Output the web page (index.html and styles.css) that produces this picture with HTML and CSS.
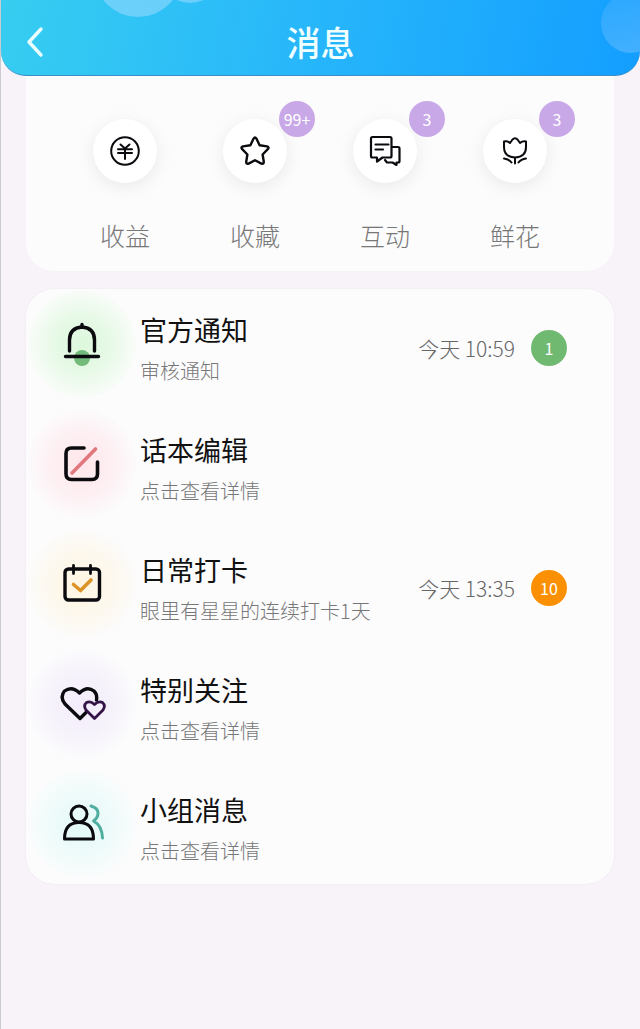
FILE: index.html
```html
<!DOCTYPE html>
<html lang="zh-CN">
<head>
    <meta charset="UTF-8">
    <meta name="viewport" content="width=device-width, initial-scale=1.0">
    <title>消息</title>
    <link rel="stylesheet" href="styles.css">
</head>
<body>
    <header class="header">
        <span class="bubble bubble-big"></span>
        <span class="bubble bubble-small"></span>
        <span class="bubble bubble-right"></span>
        <button class="back" type="button" aria-label="返回">
            <svg width="20" height="32" viewBox="0 0 20 32"><path d="M16 3 4 16l12 13" fill="none" stroke="#e8feff" stroke-width="3.4" stroke-linecap="round" stroke-linejoin="round"/></svg>
        </button>
        <h1>消息</h1>
    </header>

    <main>
        <nav class="card shortcuts">
            <a class="shortcut" href="#">
                <span class="shortcut-icon">
                    <svg class="icon" width="32" height="32" viewBox="0 0 32 32" stroke-width="2">
                        <circle cx="16" cy="16" r="13.8"/>
                        <path d="M11.5 9.5 16 13.5l4.5-4M9 14.2h14M9 18h14M16 13.5V24"/>
                    </svg>
                </span>
                <span class="shortcut-label">收益</span>
            </a>
            <a class="shortcut" href="#">
                <span class="shortcut-icon">
                    <svg class="icon" width="32" height="32" viewBox="0 0 32 32" stroke-width="2.4">
                        <path d="M14.6 3.6q1.4-2.2 2.8 0l3.2 6.6 7.4 1.2q2.6.8.8 2.8l-5.2 5.3 1.2 7.3q0 2.6-2.4 1.8L16 25.2l-6.4 3.4q-2.4.8-2.4-1.8l1.2-7.3-5.2-5.3q-1.8-2 .8-2.8l7.4-1.2z"/>
                    </svg>
                    <span class="badge badge-purple">99+</span>
                </span>
                <span class="shortcut-label">收藏</span>
            </a>
            <a class="shortcut" href="#">
                <span class="shortcut-icon">
                    <svg class="icon" width="32" height="32" viewBox="0 0 32 32" stroke-width="2.2">
                        <path d="M3.500 2H21q1.500 0 1.500 1.500V21q0 1.500-1.500 1.500h-7.500L8 26.500v-4H3.500Q2 22.500 2 21V3.500Q2 2 3.500 2zM6.500 9.500h13M6.500 14.500h7.500M23 12h6q1.500 0 1.500 1.500V26q0 1.500-1.500 1.500h-1.500V30l-4-2.500h-5.500L16 25"/>
                    </svg>
                    <span class="badge badge-purple">3</span>
                </span>
                <span class="shortcut-label">互动</span>
            </a>
            <a class="shortcut" href="#">
                <span class="shortcut-icon">
                    <svg class="icon" width="32" height="32" viewBox="0 0 32 32" stroke-width="2">
                        <path d="M5 6.500q3.200-.8 6 1.500l2.500-3.500Q16 2 18.500 4.500L21 8q2.800-2.300 6-1.500V12q0 10-11 10.500Q5 22 5 12zM16 22.500V28.500M5 23.500q5 .5 7.500 4M27 23.500q-5 .5-7.500 4"/>
                    </svg>
                    <span class="badge badge-purple">3</span>
                </span>
                <span class="shortcut-label">鲜花</span>
            </a>
        </nav>

        <ul class="card messages">
            <li>
                <a class="message" href="#">
                    <span class="message-icon green">
                        <svg class="icon" width="48" height="48" viewBox="0 0 48 48" stroke-width="3.400">
                            <circle cx="24" cy="38" r="8" fill="#72bb7a" stroke="none"/>
                            <path d="M11.500 31V20q0-12 12.500-13 12.500 1 12.500 13v11M24 6V4.500M7.500 36.500h33"/>
                        </svg>
                    </span>
                    <span class="message-text">
                        <span class="message-title">官方通知</span>
                        <span class="message-sub">审核通知</span>
                    </span>
                    <time class="message-time">今天 10:59</time>
                    <span class="badge badge-green">1</span>
                </a>
            </li>
            <li>
                <a class="message" href="#">
                    <span class="message-icon red">
                        <svg class="icon" width="48" height="48" viewBox="0 0 48 48" stroke-width="3.600">
                            <path d="M26 8H13.500Q8 8 8 13.500v20.500q0 5.500 5.500 5.500H34q5.500 0 5.500-5.500V22"/>
                            <path d="M14 33 37.500 9" stroke="#e0777d"/>
                        </svg>
                    </span>
                    <span class="message-text">
                        <span class="message-title">话本编辑</span>
                        <span class="message-sub">点击查看详情</span>
                    </span>
                </a>
            </li>
            <li>
                <a class="message" href="#">
                    <span class="message-icon orange">
                        <svg class="icon" width="48" height="48" viewBox="0 0 48 48" stroke-width="3.400">
                            <rect x="7" y="9" width="34.500" height="31" rx="3.500"/>
                            <path d="M15.500 5.500v8M32.500 5.500v8" stroke-width="2.800"/>
                            <path d="m15.500 24.500 7 6 10.500-10.500" stroke="#dc9327" stroke-width="3.600"/>
                        </svg>
                    </span>
                    <span class="message-text">
                        <span class="message-title">日常打卡</span>
                        <span class="message-sub">眼里有星星的连续打卡1天</span>
                    </span>
                    <time class="message-time">今天 13:35</time>
                    <span class="badge badge-orange">10</span>
                </a>
            </li>
            <li>
                <a class="message" href="#">
                    <span class="message-icon purple">
                        <svg class="icon" width="48" height="48" viewBox="0 0 48 48" stroke-width="3.400">
                            <path d="M28 32.500 22 38.500 7 24Q1.500 17 6.500 11q7.500-5.500 15 2 7.500-7.500 14.500-2 3.500 3.500 2.500 9"/>
                            <path d="M36.500 38.500 28 30q-3-4.500.5-7.500 4-2 8 2 4-4 8-2 3.500 3 .5 7.500z" stroke="#341447" stroke-width="2.800"/>
                        </svg>
                    </span>
                    <span class="message-text">
                        <span class="message-title">特别关注</span>
                        <span class="message-sub">点击查看详情</span>
                    </span>
                </a>
            </li>
            <li>
                <a class="message" href="#">
                    <span class="message-icon teal">
                        <svg class="icon" width="48" height="48" viewBox="0 0 48 48" stroke-width="3">
                            <circle cx="21" cy="14" r="8"/>
                            <path d="M6.500 39Q6.500 22.500 21 22.500T35.500 39z"/>
                            <path d="M33 6q7 2 7 7 0 5-4.500 8 8.500 4.500 9 17" stroke="#4fae9f"/>
                        </svg>
                    </span>
                    <span class="message-text">
                        <span class="message-title">小组消息</span>
                        <span class="message-sub">点击查看详情</span>
                    </span>
                </a>
            </li>
        </ul>
    </main>
</body>
</html>
```
FILE: styles.css
```css
* {
    box-sizing: border-box;
}
body {
    margin: 0;
    min-height: 100vh;
    border-left: 1px solid #c8cbd2;
    background-color: #f8f3f8;
    font-family: "Noto Sans CJK SC", sans-serif;
    color: #111;
}
a {
    color: inherit;
    text-decoration: none;
}

/* header */
.header {
    position: relative;
    overflow: hidden;
    display: flex;
    align-items: center;
    height: 76px;
    padding: 8px 24px 0;
    border-bottom: 1px solid #3a8fc4;
    border-radius: 0 0 25px 25px;
    background: linear-gradient(100deg, #37cdf0 0%, #28b8fa 45%, #139eff 100%);
}
.header h1 {
    flex: 1;
    margin: 0 20px 0 0;
    font-size: 34px;
    line-height: 48px;
    font-weight: 500;
    text-align: center;
    color: #f0ffff;
}
.back {
    display: flex;
    width: 20px;
    padding: 0;
    border: none;
    background: none;
    cursor: pointer;
}
.bubble {
    position: absolute;
    border-radius: 50%;
    background-color: rgba(165, 222, 255, 0.5);
}
.bubble-big {
    top: -71px;
    left: 93px;
    width: 88px;
    height: 88px;
}
.bubble-small {
    top: -61px;
    left: 157px;
    width: 64px;
    height: 64px;
}
.bubble-right {
    top: -7px;
    right: -21px;
    width: 60px;
    height: 60px;
    background: linear-gradient(160deg, rgba(120, 195, 255, 0.2), rgba(120, 195, 255, 0.5));
}

/* cards */
.card {
    margin: 0 26px 18px 25px;
    background-color: #fcfcfd;
    border-radius: 28px;
}
.icon {
    fill: none;
    stroke: #0b0b0f;
    stroke-linecap: round;
    stroke-linejoin: round;
}
.badge {
    display: flex;
    align-items: center;
    justify-content: center;
    width: 36px;
    height: 36px;
    border-radius: 50%;
    font-size: 16px;
    color: #fff;
}
.badge-purple {
    position: absolute;
    top: -18px;
    right: -28px;
    background-color: #c9a8e8;
}
.badge-green {
    background-color: #70b970;
}
.badge-orange {
    background-color: #fb9004;
}

/* shortcuts */
.shortcuts {
    display: flex;
    padding: 43px 34px 16px;
    border-radius: 0 0 28px 28px;
}
.shortcut {
    flex: 1;
    display: flex;
    flex-direction: column;
    align-items: center;
    gap: 32px;
}
.shortcut-icon {
    position: relative;
    display: flex;
    align-items: center;
    justify-content: center;
    width: 64px;
    height: 64px;
    border-radius: 50%;
    background-color: #fff;
    box-shadow: 0 4px 18px rgba(0, 0, 0, 0.08);
}
.shortcut-label {
    font-size: 25px;
    line-height: 40px;
    font-weight: 300;
    color: #777;
}

/* messages */
.messages {
    display: flex;
    flex-direction: column;
    gap: 5px;
    padding: 0;
    list-style: none;
    box-shadow: 0 0 2px rgba(80, 60, 90, 0.08);
}
.message {
    display: flex;
    align-items: center;
    gap: 16px;
    padding: 1px 47px 6px 2px;
}
.message-icon {
    display: flex;
    align-items: center;
    justify-content: center;
    width: 108px;
    height: 108px;
    border-radius: 50%;
}
.message-text {
    flex: 1;
    display: flex;
    flex-direction: column;
    margin-left: -12px;
    padding-top: 14px;
}
.message-title {
    font-size: 27px;
    line-height: 40px;
}
.message-sub {
    font-size: 20px;
    line-height: 42px;
    font-weight: 300;
    color: #777;
}
.message-time {
    font-size: 21px;
    font-weight: 300;
    color: #666;
}
.message-time,
.message .badge {
    margin-top: 8px;
}
.green {
    background: radial-gradient(closest-side, #dcf8dc 0%, #e6f9e6 50%, #f9fcf9 100%);
}
.red {
    background: radial-gradient(closest-side, #ffe6ea 0%, #fdf0f3 60%, #fcfafc 100%);
}
.orange {
    background: radial-gradient(closest-side, #fff5e2 0%, #fdf8ee 60%, #fcfbfa 100%);
}
.purple {
    background: radial-gradient(closest-side, #f3ebfb 0%, #f6f3fb 60%, #fbfafc 100%);
}
.teal {
    background: radial-gradient(closest-side, #e2faf7 0%, #effbfa 60%, #fafcfc 100%);
}
```
